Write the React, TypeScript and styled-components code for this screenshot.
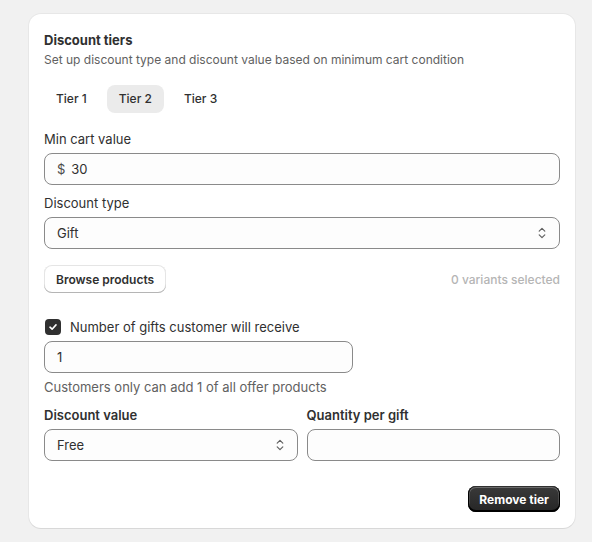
import React, { useState } from 'react';
import styled, { createGlobalStyle } from 'styled-components';

const GlobalStyle = createGlobalStyle`
  html, body {
    margin: 0;
    padding: 0;
    background: #f1f1f1;
  }
  body {
    font-family: Inter, "Noto Sans", "Liberation Sans", sans-serif;
    font-size: 13px;
    color: #303030;
    -webkit-font-smoothing: antialiased;
  }
`;

const Page = styled.div`
  padding: 14px 17px 14px 29px;
`;

const Card = styled.div`
  background: #fff;
  border-radius: 12px;
  box-shadow: 0 1px 0 rgba(26, 26, 26, 0.07), 0 0 0 1px rgba(0, 0, 0, 0.04);
  padding: 16px 15px 16px 15px;
  display: flex;
  flex-direction: column;
`;

const Title = styled.h2`
  margin: 0;
  font-size: 13px;
  line-height: 20px;
  font-weight: 650;
  color: #303030;
`;

const Subtitle = styled.p`
  margin: 0;
  font-size: 12px;
  line-height: 20px;
  color: #616161;
`;

const Tabs = styled.div`
  display: flex;
  gap: 8px;
  margin: 15px 0 16px;
`;

const Tab = styled.button<{ $active?: boolean }>`
  height: 28px;
  padding: 0 12px 1px;
  border: none;
  border-radius: 8px;
  background: ${(p) => (p.$active ? '#ebebeb' : 'transparent')};
  font: inherit;
  font-size: 12px;
  font-weight: 500;
  color: #303030;
  cursor: pointer;
`;

const Label = styled.div<{ $bold?: boolean }>`
  line-height: 20px;
  margin-bottom: 4px;
  font-weight: ${(p) => (p.$bold ? 600 : 400)};
  color: #303030;
`;

const Field = styled.div`
  display: flex;
  flex-direction: column;
  min-width: 0;
`;

const Stack = styled.div`
  display: flex;
  flex-direction: column;
  gap: 8px;
`;

const InputBox = styled.div<{ $width?: string }>`
  height: 32px;
  box-sizing: border-box;
  width: ${(p) => p.$width || '100%'};
  border: 1px solid #8a8a8a;
  border-radius: 8px;
  background: #fdfdfd;
  display: flex;
  align-items: center;
  padding: 0 12px;
  gap: 6px;
  color: #303030;
`;

const Prefix = styled.span`
  color: #4a4a4a;
`;

const Value = styled.span`
  flex: 1;
`;

const Chevrons = () => (
  <svg width="10" height="14" viewBox="0 0 10 14" fill="none">
    <path d="M2.2 5.2 5 2.4l2.8 2.8" stroke="#616161" strokeWidth="1.2" strokeLinecap="round" strokeLinejoin="round" />
    <path d="M2.2 8.8 5 11.6l2.8-2.8" stroke="#616161" strokeWidth="1.2" strokeLinecap="round" strokeLinejoin="round" />
  </svg>
);

const BrowseRow = styled.div`
  display: flex;
  align-items: center;
  justify-content: space-between;
  margin-top: 16px;
`;

const SecondaryButton = styled.button`
  height: 28px;
  padding: 0 12px;
  border: none;
  border-radius: 8px;
  background: #fff;
  box-shadow: 0 -1px 0 0 #b5b5b5 inset, 0 0 0 1px rgba(0, 0, 0, 0.1) inset,
    0 0.5px 0 1.5px #fff inset;
  font: inherit;
  font-size: 12px;
  font-weight: 600;
  color: #303030;
  cursor: pointer;
`;

const Muted = styled.span`
  font-size: 12px;
  color: #b5b5b5;
  font-weight: 500;
`;

const CheckRow = styled.label`
  display: flex;
  align-items: center;
  gap: 9px;
  line-height: 20px;
  margin-top: 24px;
  margin-bottom: 4px;
  cursor: pointer;
`;

const CheckBox = styled.span`
  width: 16px;
  height: 16px;
  border-radius: 4px;
  background: #303030;
  display: flex;
  align-items: center;
  justify-content: center;
  margin-left: 1px;
`;

const Help = styled.div`
  margin-top: 4px;
  line-height: 20px;
  color: #616161;
`;

const Grid = styled.div`
  display: grid;
  grid-template-columns: 1fr 1fr;
  gap: 9px;
  margin-top: 8px;
`;

const Footer = styled.div`
  display: flex;
  justify-content: flex-end;
  margin-top: 25px;
`;

const PrimaryButton = styled.button`
  height: 26px;
  padding: 0 11px;
  border: none;
  border-radius: 8px;
  background: linear-gradient(180deg, #3a3a3a 0%, #262626 100%);
  box-shadow: 0 -1px 0 1px #000 inset, 0 0 0 1px #303030 inset,
    0 0.5px 0 1.5px rgba(255, 255, 255, 0.25) inset;
  color: #fff;
  font: inherit;
  font-size: 12px;
  font-weight: 700;
  cursor: pointer;
`;

export default function App() {
  const [tier, setTier] = useState(2);
  return (
    <>
      <GlobalStyle />
      <Page>
        <Card>
          <Title>Discount tiers</Title>
          <Subtitle>Set up discount type and discount value based on minimum cart condition</Subtitle>
          <Tabs>
            {[1, 2, 3].map((t) => (
              <Tab key={t} $active={tier === t} onClick={() => setTier(t)}>
                Tier {t}
              </Tab>
            ))}
          </Tabs>
          <Stack>
            <Field>
              <Label>Min cart value</Label>
              <InputBox>
                <Prefix>$</Prefix>
                <Value>30</Value>
              </InputBox>
            </Field>
            <Field>
              <Label>Discount type</Label>
              <InputBox>
                <Value>Gift</Value>
                <Chevrons />
              </InputBox>
            </Field>
          </Stack>
          <BrowseRow>
            <SecondaryButton>Browse products</SecondaryButton>
            <Muted>0 variants selected</Muted>
          </BrowseRow>
          <CheckRow>
            <CheckBox>
              <svg width="12" height="12" viewBox="0 0 12 12" fill="none">
                <path d="M3 6.2 5.1 8.2 9 3.9" stroke="#fff" strokeWidth="1.6" strokeLinecap="round" strokeLinejoin="round" />
              </svg>
            </CheckBox>
            Number of gifts customer will receive
          </CheckRow>
          <InputBox $width="309px">
            <Value>1</Value>
          </InputBox>
          <Help>Customers only can add 1 of all offer products</Help>
          <Grid>
            <Field>
              <Label $bold>Discount value</Label>
              <InputBox>
                <Value>Free</Value>
                <Chevrons />
              </InputBox>
            </Field>
            <Field>
              <Label $bold>Quantity per gift</Label>
              <InputBox />
            </Field>
          </Grid>
          <Footer>
            <PrimaryButton>Remove tier</PrimaryButton>
          </Footer>
        </Card>
      </Page>
    </>
  );
}
